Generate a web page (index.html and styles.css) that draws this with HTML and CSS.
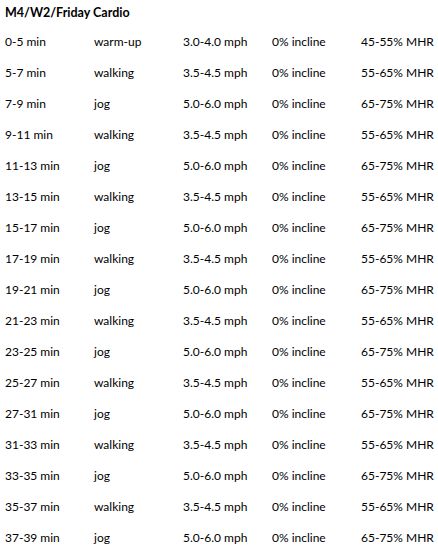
FILE: index.html
```html
<!DOCTYPE html>
<html>
<head>
<meta charset="utf-8">
<link rel="stylesheet" href="styles.css">
</head>
<body>
<div class="sheet">
  <div class="title">M4/W2/Friday Cardio</div>
  <div class="rows">
    <div class="row"><span>0-5 min</span><span>warm-up</span><span>3.0-4.0 mph</span><span>0% incline</span><span>45-55% MHR</span></div>
    <div class="row"><span>5-7 min</span><span>walking</span><span>3.5-4.5 mph</span><span>0% incline</span><span>55-65% MHR</span></div>
    <div class="row"><span>7-9 min</span><span>jog</span><span>5.0-6.0 mph</span><span>0% incline</span><span>65-75% MHR</span></div>
    <div class="row"><span>9-11 min</span><span>walking</span><span>3.5-4.5 mph</span><span>0% incline</span><span>55-65% MHR</span></div>
    <div class="row"><span>11-13 min</span><span>jog</span><span>5.0-6.0 mph</span><span>0% incline</span><span>65-75% MHR</span></div>
    <div class="row"><span>13-15 min</span><span>walking</span><span>3.5-4.5 mph</span><span>0% incline</span><span>55-65% MHR</span></div>
    <div class="row"><span>15-17 min</span><span>jog</span><span>5.0-6.0 mph</span><span>0% incline</span><span>65-75% MHR</span></div>
    <div class="row"><span>17-19 min</span><span>walking</span><span>3.5-4.5 mph</span><span>0% incline</span><span>55-65% MHR</span></div>
    <div class="row"><span>19-21 min</span><span>jog</span><span>5.0-6.0 mph</span><span>0% incline</span><span>65-75% MHR</span></div>
    <div class="row"><span>21-23 min</span><span>walking</span><span>3.5-4.5 mph</span><span>0% incline</span><span>55-65% MHR</span></div>
    <div class="row"><span>23-25 min</span><span>jog</span><span>5.0-6.0 mph</span><span>0% incline</span><span>65-75% MHR</span></div>
    <div class="row"><span>25-27 min</span><span>walking</span><span>3.5-4.5 mph</span><span>0% incline</span><span>55-65% MHR</span></div>
    <div class="row"><span>27-31 min</span><span>jog</span><span>5.0-6.0 mph</span><span>0% incline</span><span>65-75% MHR</span></div>
    <div class="row"><span>31-33 min</span><span>walking</span><span>3.5-4.5 mph</span><span>0% incline</span><span>55-65% MHR</span></div>
    <div class="row"><span>33-35 min</span><span>jog</span><span>5.0-6.0 mph</span><span>0% incline</span><span>65-75% MHR</span></div>
    <div class="row"><span>35-37 min</span><span>walking</span><span>3.5-4.5 mph</span><span>0% incline</span><span>55-65% MHR</span></div>
    <div class="row"><span>37-39 min</span><span>jog</span><span>5.0-6.0 mph</span><span>0% incline</span><span>65-75% MHR</span></div>
  </div>
</div>
</body>
</html>
```

FILE: styles.css
```css
html, body {
  margin: 0;
  padding: 0;
  background: #ffffff;
}
.sheet {
  padding: 0 0 0 5px;
  font-family: "Lato", "Open Sans", sans-serif;
  font-size: 12px;
  color: #000000;
}
.title {
  font-weight: bold;
  font-size: 12.5px;
  height: 26px;
  line-height: 25px;
}
.rows {
  display: flex;
  flex-direction: column;
}
.row {
  display: grid;
  grid-template-columns: 89px 89px 89px 89px 89px;
  height: 31px;
  line-height: 31px;
  white-space: nowrap;
}
```
